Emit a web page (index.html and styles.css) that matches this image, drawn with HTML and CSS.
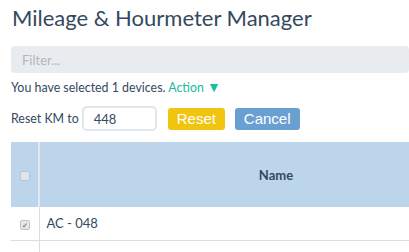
FILE: index.html
```html
<!DOCTYPE html>
<html lang="en">
<head>
    <meta charset="UTF-8">
    <title>Mileage &amp; Hourmeter Manager</title>
    <link rel="stylesheet" href="styles.css">
</head>
<body>
    <div class="page">
        <h1>Mileage &amp; Hourmeter Manager</h1>

        <input class="filter" type="text" placeholder="Filter...">

        <p class="selection">You have selected 1 devices. <a class="action" href="#">Action <span class="caret">&#9660;</span></a></p>

        <div class="reset-row">
            <label for="km">Reset KM to</label>
            <input id="km" class="km-input" type="text" value="448">
            <button class="btn btn-reset">Reset</button>
            <button class="btn btn-cancel">Cancel</button>
        </div>

        <table class="devices">
            <thead>
                <tr>
                    <th class="check-col"><span class="box"></span></th>
                    <th class="name-col">Name</th>
                    <th class="extra-col"></th>
                </tr>
            </thead>
            <tbody>
                <tr>
                    <td class="check-col"><span class="box checked">&#10004;</span></td>
                    <td>AC - 048</td>
                    <td></td>
                </tr>
                <tr>
                    <td class="check-col"><span class="box"></span></td>
                    <td>AC - 049</td>
                    <td></td>
                </tr>
            </tbody>
        </table>
    </div>
</body>
</html>
```

FILE: styles.css
```css
:root {
    --text: #34495e;
    --teal: #1abc9c;
    --yellow: #f1c40f;
    --blue: #6a9fd1;
    --header-bg: #bdd5ea;
    --line: #dddddd;
}

* {
    margin: 0;
    padding: 0;
    box-sizing: border-box;
}

body {
    font-family: Lato, "Open Sans", sans-serif;
    color: var(--text);
    background: #fff;
    overflow: hidden;
}

.page {
    padding: 3px 0 0 11px;
    width: 1000px;
}

/* Title */
h1 {
    font-size: 22px;
    font-weight: 400;
    line-height: 30px;
    margin-left: 1px;
    color: var(--text);
}

/* Filter */
.filter {
    display: block;
    width: 398px;
    height: 27px;
    margin-top: 13px;
    border: none;
    border-radius: 4px;
    background: #e9ecee;
    padding: 0 11px;
    font-family: inherit;
    font-size: 13px;
    color: var(--text);
}

.filter::placeholder {
    color: #b0b6bd;
}

/* Selection line */
.selection {
    font-size: 12.4px;
    line-height: 16px;
    margin-top: 7px;
}

.action {
    color: var(--teal);
    text-decoration: none;
}

.caret {
    font-size: 14px;
    line-height: 14px;
}

/* Reset row */
.reset-row {
    display: flex;
    align-items: center;
    margin-top: 10px;
    font-size: 12.4px;
}

.km-input {
    width: 75px;
    height: 25px;
    margin-left: 3px;
    border: 2px solid #dfe6ec;
    border-radius: 5px;
    padding: 0 10px;
    font-family: inherit;
    font-size: 13px;
    color: var(--text);
}

.btn {
    height: 22px;
    border: none;
    border-radius: 3px;
    color: #fff;
    font-family: Arial, "Liberation Sans", sans-serif;
    font-size: 15px;
    padding: 0 9px;
}

.btn-reset {
    background: var(--yellow);
    margin-left: 11px;
    width: 57px;
}

.btn-cancel {
    background: var(--blue);
    margin-left: 10px;
    width: 65px;
}

/* Table */
.devices {
    margin-top: 11px;
    border-collapse: collapse;
    font-size: 13px;
}

.devices th {
    background: var(--header-bg);
    height: 65px;
    font-weight: 700;
    font-size: 13px;
    border-right: 2px solid #e2e8ee;
}

.devices td {
    height: 33px;
    border-bottom: 1px solid var(--line);
    border-right: 1px solid var(--line);
    padding-left: 7px;
}

.check-col {
    width: 28px;
    text-align: center;
}

.devices td.check-col {
    padding-left: 0;
}

.name-col {
    width: 474px;
}

.extra-col {
    width: 300px;
}

.box {
    display: inline-block;
    width: 10px;
    height: 10px;
    border: 1px solid #b7c4cf;
    border-radius: 2px;
    background: #dde6ee;
    vertical-align: middle;
    font-size: 7px;
    line-height: 8px;
    color: #888;
}

.box.checked {
    background: #e6e6e6;
    border-color: #c4c4c4;
}
```
